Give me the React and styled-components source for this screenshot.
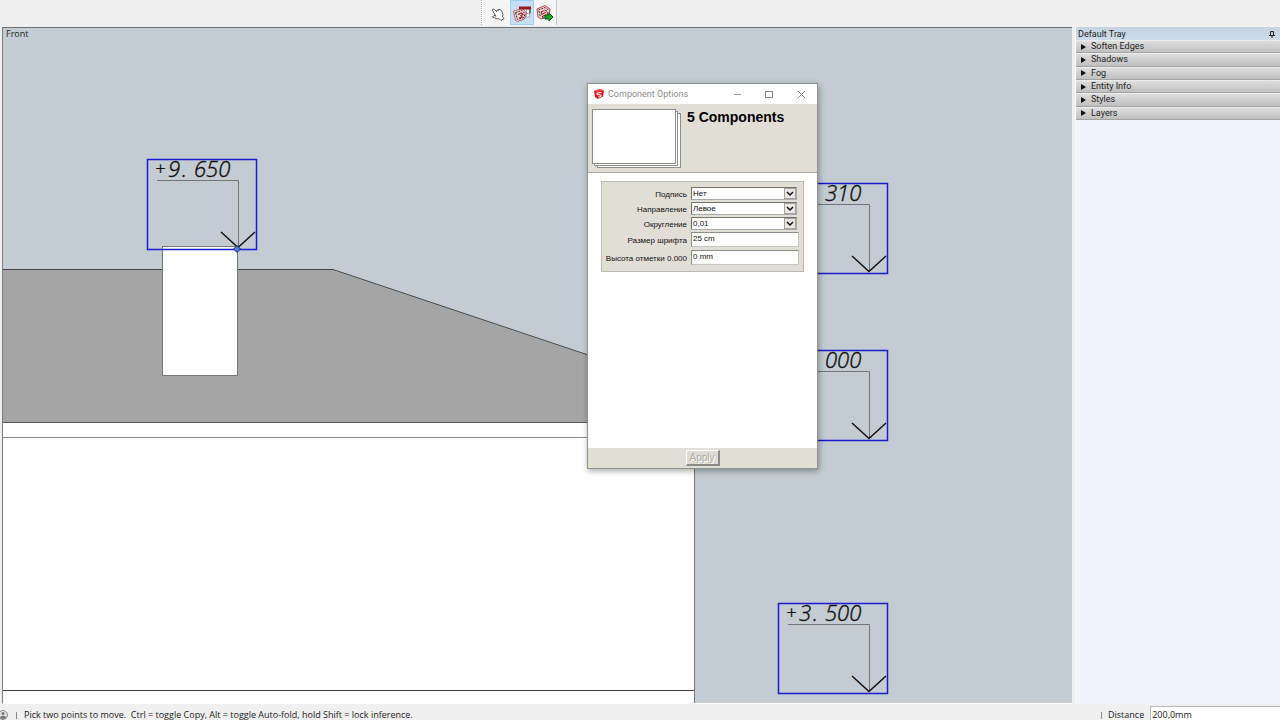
import React from "react";
import styled, { createGlobalStyle } from "styled-components";

const Global = createGlobalStyle`
  *, *::before, *::after { box-sizing: border-box; }
  html, body { margin: 0; }
  body { background: #f0f0f0; color: #222; font: 9px/14px "Open Sans", "Noto Sans", sans-serif; }
  button, input, select { font: inherit; color: inherit; }
  h1, h2, p { margin: 0; font-weight: 400; font-size: inherit; }
`;

const Shell = styled.div`
  display: grid;
  grid-template-rows: 27px minmax(0, 1fr) 16px;
  height: 100vh;
  overflow: hidden;
`;

const Toolbar = styled.div`
  display: flex;
  justify-content: flex-start;
  align-items: stretch;
  padding: 0 0 2px 481px;
`;

const ToolGroup = styled.div`
  display: flex;
  align-items: stretch;
  padding-left: 4px;
  background: #f5f5f5;
  border-left: 1px dotted #aaa;
  border-right: 1px solid #c8c8c8;
`;

const ToolButton = styled.button`
  display: grid;
  place-items: center;
  width: ${(p) => (p.$small ? 22 : 24)}px;
  padding: 2px 0 0;
  border: 1px solid ${(p) => (p.$active ? "#a3cdf3" : "transparent")};
  background: ${(p) => (p.$active ? "#c4dff7" : "transparent")};
`;

const Main = styled.main`
  display: grid;
  grid-template-columns: minmax(0, 1fr) 205px;
  column-gap: 3px;
  padding-left: 2px;
  min-height: 0;
`;

const Viewport = styled.section`
  position: relative;
  overflow: hidden;
  background: #c3ccd2;
  border-top: 1px solid #6b6f72;
  border-left: 1px solid #7a7d80;
  border-bottom: 1px solid #fff;
`;

const Scene = styled.svg`
  display: block;
  width: 100%;
  height: 100%;
`;

const ViewName = styled.p`
  position: absolute;
  top: 0;
  left: 3px;
  line-height: 12px;
`;

const Tray = styled.aside`
  background: #f1f4fd;
  border-left: 1px solid #f8f9fc;
  font-family: Roboto, "Open Sans", sans-serif;
`;

const TrayTitle = styled.h2`
  display: flex;
  justify-content: space-between;
  align-items: center;
  height: 13px;
  padding: 0 5px 0 2px;
  background: linear-gradient(#c6d4e3, #cedbe9);
`;

const Section = styled.button`
  display: flex;
  align-items: center;
  gap: 5px;
  width: 100%;
  padding: 0 5px;
  border: 0;
  border-top: 1px solid #ececec;
  border-bottom: 1px solid #a4a4a4;
  background: linear-gradient(#dedede, #c0c0c0);
  text-align: left;
  line-height: 11px;
`;

const Sections = styled.div`
  display: grid;
  grid-auto-rows: 1fr;
  height: 80px;
`;

const StatusBar = styled.footer`
  display: grid;
  grid-template-columns: minmax(0, 1fr) 179px;
  align-items: start;
  padding-top: 2px;
`;

const Hint = styled.div`
  display: flex;
  align-items: center;
  gap: 7px;
  white-space: pre;
  line-height: 18px;
`;

const Divider = styled.span`
  width: 1px;
  height: 7px;
  background: #8a8a8a;
`;

const Measure = styled.label`
  display: flex;
  align-items: center;
  gap: 6px;
  line-height: 18px;
`;

const MeasureBox = styled.input`
  flex: 1;
  min-width: 0;
  height: 18px;
  padding: 0 1px;
  border: 1px solid #b4b8bc;
  border-right: 0;
  background: #fff;
`;

const Dialog = styled.section`
  position: absolute;
  top: 55px;
  left: 584px;
  display: flex;
  flex-direction: column;
  width: 231px;
  min-height: 386px;
  border: 1px solid #8f9496;
  background: #fff;
  box-shadow: 1px 2px 6px rgba(0, 0, 0, 0.35);
`;

const TitleBar = styled.header`
  display: flex;
  align-items: center;
  height: 20px;
  padding-left: 6px;
  color: #8e8e8e;
  font-family: Roboto, "Open Sans", sans-serif;
`;

const DialogTitle = styled.h1`
  flex: 1;
  padding-left: 4px;
`;

const WindowButton = styled.button`
  display: grid;
  place-items: center;
  width: 32px;
  height: 20px;
  padding: 0;
  border: 0;
  background: none;
`;

const Summary = styled.div`
  display: flex;
  gap: 5px;
  height: 69px;
  padding: 5px 4px;
  background: #e1ded6;
  border-bottom: 1px solid #aaa9a4;
`;

const Count = styled.h2`
  && {
    font: bold 14px/16px "Liberation Sans", Arial, sans-serif;
    color: #000;
  }
`;

const Form = styled.form`
  display: flex;
  flex: 1;
  flex-direction: column;
`;

const Fields = styled.div`
  display: grid;
  margin: 8px 13px auto;
  padding: 5px 4px 3px 3px;
  border: 1px solid #bdbbb5;
  background: #e1ded6;
  font: 8px/11px "Liberation Sans", Arial, sans-serif;
  color: #111;
`;

const Field = styled.label`
  display: grid;
  grid-template-columns: 82px minmax(0, 1fr);
  column-gap: 4px;
  padding-bottom: ${(p) => (p.$tall ? 3 : 2)}px;
`;

const Caption = styled.span`
  text-align: right;
  white-space: nowrap;
  padding-top: ${(p) => (p.$low ? 3 : 2)}px;
`;

const Drop = styled.select`
  width: 106px;
  height: 13px;
  padding: 0 1px;
  appearance: none;
  border: 1px solid #74746f;
  border-right-color: #aaa;
  border-bottom-color: #aaa;
  border-radius: 0;
  background: #fff;
  line-height: 11px;
`;

const DropWrap = styled.span`
  position: relative;
  display: flex;
`;

const DropMark = styled.svg`
  position: absolute;
  top: 1px;
  left: 93px;
  pointer-events: none;
`;

const TextBox = styled.input`
  width: 108px;
  height: 15px;
  padding: 0 1px 2px;
  border: 1px solid #8d8d89;
  border-right-color: #c4c4c0;
  border-bottom-color: #c4c4c0;
  background: #fff;
`;

const Actions = styled.div`
  display: flex;
  justify-content: center;
  height: 20px;
  padding-top: 2px;
  background: #e1ded6;
`;

const Apply = styled.button`
  width: 34px;
  height: 16px;
  padding: 0;
  border: 1px solid #fff;
  border-right: 2px solid #8c8b87;
  border-bottom: 2px solid #8c8b87;
  background: #dcdad3;
  && { color: #aaa9a5; }
  font: 10px/12px "Liberation Sans", Arial, sans-serif;
  text-shadow: 1px 1px 0 #fff;
`;

const MarkText = styled.text`
  font: italic 300 ${(p) => (p.$sign ? 18 : 22)}px "Open Sans", sans-serif;
  fill: #111;
  stroke: #111;
  stroke-width: 0.4;
`;

function HandIcon() {
  return (
    <svg width="14" height="14" viewBox="0 0 14 14" fill="#fff" stroke="#555" strokeLinejoin="round" aria-hidden="true">
      <path d="M1.500 3.500C1 2 2.500 1.500 3.500 2.500L5.500 4.500 6 3l1.500.5.5-1.500 1.500 1 1 .5 1.500 4-.5 2 1.500 2-3 2-1.500-1.500C6.500 12 4 11 1.500 10L3 8.500l2 .7L3.500 7z" />
    </svg>
  );
}

function BoxArt() {
  return (
    <>
      <path d="M.5 6l9-2.500 4 4.500-2 6-7 2.500-2-1z" fill="#f4d3d2" stroke="#c26468" />
      <path d="M2.500 7.500l6.500-2 3 3-1 4-6.500 2z" fill="none" stroke="#3b292b" strokeDasharray="2 1" />
      <path d="M5 9.500l3.500-1.500 1.500 1.500-2 1 1 1.500-3 1" fill="none" stroke="#8f2930" strokeWidth="1.200" />
    </>
  );
}

function OptionsIcon() {
  return (
    <svg width="18" height="17" viewBox="0 0 18 17" aria-hidden="true">
      <path d="M8 4h8.500v8H8z" fill="#fff" stroke="#aaa" />
      <path d="M13.500 4v8M11 8.500h5" stroke="#aaa" />
      <BoxArt />
      <path d="M6 1.500h12v3H6z" fill="#981b20" />
      <path d="M17 4.500v4" stroke="#222" />
    </svg>
  );
}

function AttributesIcon() {
  return (
    <svg width="18" height="17" viewBox="0 0 18 17" aria-hidden="true">
      <path d="M1 4l8-3.500 5 3.500-1 8-8 2-3-2z" fill="#f4d3d2" stroke="#b34b50" />
      <path d="M2.500 5L9 2.500 12.500 5M3 6l1.500 6" fill="none" stroke="#3b292b" strokeDasharray="2 1" />
      <path d="M5 7l4-2 3 2-1 4-4 2z" fill="#eeb8b8" stroke="#6c2529" strokeDasharray="3 1" />
      <path d="M6.500 9l3-1.500M7 11l3-1" stroke="#98242a" />
      <path d="M9 10h4V8l4 4-4 4v-2H9z" fill="#16a12b" stroke="#075d16" />
    </svg>
  );
}

function Logo() {
  return (
    <svg width="10" height="10" viewBox="0 0 10 10" aria-hidden="true">
      <path d="M0 2l6-2 4 1.500-1 6-5 2.500-3-2z" fill="#d71920" />
      <path d="M0 2l3 1 7-1.500L6 0z" fill="#ee4a4c" />
      <path d="M7.500 3.500L3 4v1.500l4 .5v1.500L4 8" fill="none" stroke="#fff" />
    </svg>
  );
}

function LevelMark({ x, y, sign, whole, fraction }) {
  return (
    <g transform={`translate(${x} ${y})`}>
      <path d="M10 21.500H91.500V88" fill="none" stroke="#6f7578" />
      <path d="M74 73l17 15.500L108 73" fill="none" stroke="#111" strokeWidth="1.500" />
      <rect x=".5" y=".5" width="109" height="90" fill="none" stroke="#1a1ad0" strokeWidth="1.500" />
      {sign && <MarkText $sign x="8" y="16">{sign}</MarkText>}
      <MarkText>
        {whole && <tspan x="21" y="18">{whole}</tspan>}
        {whole && <tspan x="35" y="18">.</tspan>}
        <tspan x="47" y="18">{fraction}</tspan>
      </MarkText>
    </g>
  );
}

function Drawing() {
  return (
    <Scene role="img" aria-label="Front elevation with level marks">
      <g transform="translate(-3 -28)">
        <path d="M3 270H333L694 391V423H3z" fill="#a5a5a5" />
        <path d="M3 269.500H333L694 390.500" fill="none" stroke="#444" />
        <rect x="3" y="423" width="691" height="282" fill="#fff" />
        <path d="M3 422.500H694" stroke="#555" />
        <path d="M3 437.500H694" stroke="#8a8f91" />
        <path d="M3 690.500H694" stroke="#444" />
        <path d="M694.500 391V705" stroke="#777" />
        <rect x="162.500" y="246.500" width="75" height="129" fill="#fff" stroke="#777" />
        <LevelMark x={147} y={159} sign="+" whole="9" fraction="650" />
        <LevelMark x={778} y={183} fraction="310" />
        <LevelMark x={778} y={350} fraction="000" />
        <LevelMark x={778} y={603} sign="+" whole="3" fraction="500" />
        <path d="M237 245.500l3.500 3.500-3.500 3.500-3.500-3.500z" fill="#4f7ddd" stroke="#142b80" />
      </g>
    </Scene>
  );
}

function Pages() {
  return (
    <svg width="90" height="59" viewBox="0 0 90 59" aria-hidden="true">
      <g fill="#fff" stroke="#8d8d8a">
        <rect x="5.500" y="4.500" width="83" height="54" />
        <rect x="2.500" y="2.500" width="83" height="54" />
        <rect x=".5" y=".5" width="83" height="54" />
      </g>
    </svg>
  );
}

function DropField({ label, value }) {
  return (
    <Field>
      <Caption>{label}</Caption>
      <DropWrap>
        <Drop defaultValue={value}>
          <option>{value}</option>
        </Drop>
        <DropMark width="12" height="11" viewBox="0 0 12 11" aria-hidden="true">
          <rect x=".5" y=".5" width="11" height="10" fill="#e9e7e1" stroke="#a3a29d" />
          <path d="M3 4l3 3 3-3" fill="none" stroke="#111" strokeWidth="1.500" />
        </DropMark>
      </DropWrap>
    </Field>
  );
}

function TextField({ label, value }) {
  return (
    <Field $tall>
      <Caption $low>{label}</Caption>
      <TextBox defaultValue={value} />
    </Field>
  );
}

function OptionsDialog() {
  return (
    <Dialog role="dialog" aria-labelledby="options-title">
      <TitleBar>
        <Logo />
        <DialogTitle id="options-title">Component Options</DialogTitle>
        <WindowButton aria-label="Minimize">
          <svg width="9" height="9" stroke="#999"><path d="M1 4.500h7" /></svg>
        </WindowButton>
        <WindowButton aria-label="Maximize">
          <svg width="9" height="9" fill="none" stroke="#888"><rect x=".5" y="1.500" width="7" height="6" /></svg>
        </WindowButton>
        <WindowButton aria-label="Close">
          <svg width="9" height="9" stroke="#888"><path d="M1 1l7 7M8 1L1 8" /></svg>
        </WindowButton>
      </TitleBar>
      <Summary>
        <Pages />
        <Count>5 Components</Count>
      </Summary>
      <Form onSubmit={(e) => e.preventDefault()}>
        <Fields>
          <DropField label="Подпись" value="Нет" />
          <DropField label="Направление" value="Левое" />
          <DropField label="Округление" value="0,01" />
          <TextField label="Размер шрифта" value="25 cm" />
          <TextField label="Высота отметки 0.000" value="0 mm" />
        </Fields>
        <Actions>
          <Apply disabled>Apply</Apply>
        </Actions>
      </Form>
    </Dialog>
  );
}

const sections = ["Soften Edges", "Shadows", "Fog", "Entity Info", "Styles", "Layers"];

export default function App() {
  return (
    <>
      <Global />
      <Shell>
        <Toolbar>
          <ToolGroup>
            <ToolButton aria-label="Interact"><HandIcon /></ToolButton>
            <ToolButton $active aria-label="Component options"><OptionsIcon /></ToolButton>
            <ToolButton $small aria-label="Component attributes"><AttributesIcon /></ToolButton>
          </ToolGroup>
        </Toolbar>
        <Main>
          <Viewport>
            <Drawing />
            <ViewName>Front</ViewName>
            <OptionsDialog />
          </Viewport>
          <Tray>
            <TrayTitle>
              Default Tray
              <svg width="6" height="8" fill="none" stroke="#222" aria-hidden="true">
                <path d="M1.500 5.500v-4h3v4M0 5.500h6M3 6v2" />
              </svg>
            </TrayTitle>
            <Sections>
              {sections.map((name) => (
                <Section key={name}>
                  <svg width="5" height="6" aria-hidden="true"><path d="M0 0l5 3-5 3z" fill="#111" /></svg>
                  {name}
                </Section>
              ))}
            </Sections>
          </Tray>
        </Main>
        <StatusBar>
          <Hint>
            <svg width="9" height="10" viewBox="0 0 9 10" aria-hidden="true">
              <circle cx="3" cy="5" r="4.500" fill="#e2e2e2" stroke="#888" />
              <circle cx="3" cy="3.500" r="1.500" fill="#777" />
              <path d="M0 8c0-3 6-3 6 0L3 9z" fill="#777" />
            </svg>
            <Divider />
            <span>Pick two points to move.  Ctrl = toggle Copy, Alt = toggle Auto-fold, hold Shift = lock inference.</span>
          </Hint>
          <Measure>
            <Divider />
            Distance
            <MeasureBox defaultValue="200,0mm" />
          </Measure>
        </StatusBar>
      </Shell>
    </>
  );
}
